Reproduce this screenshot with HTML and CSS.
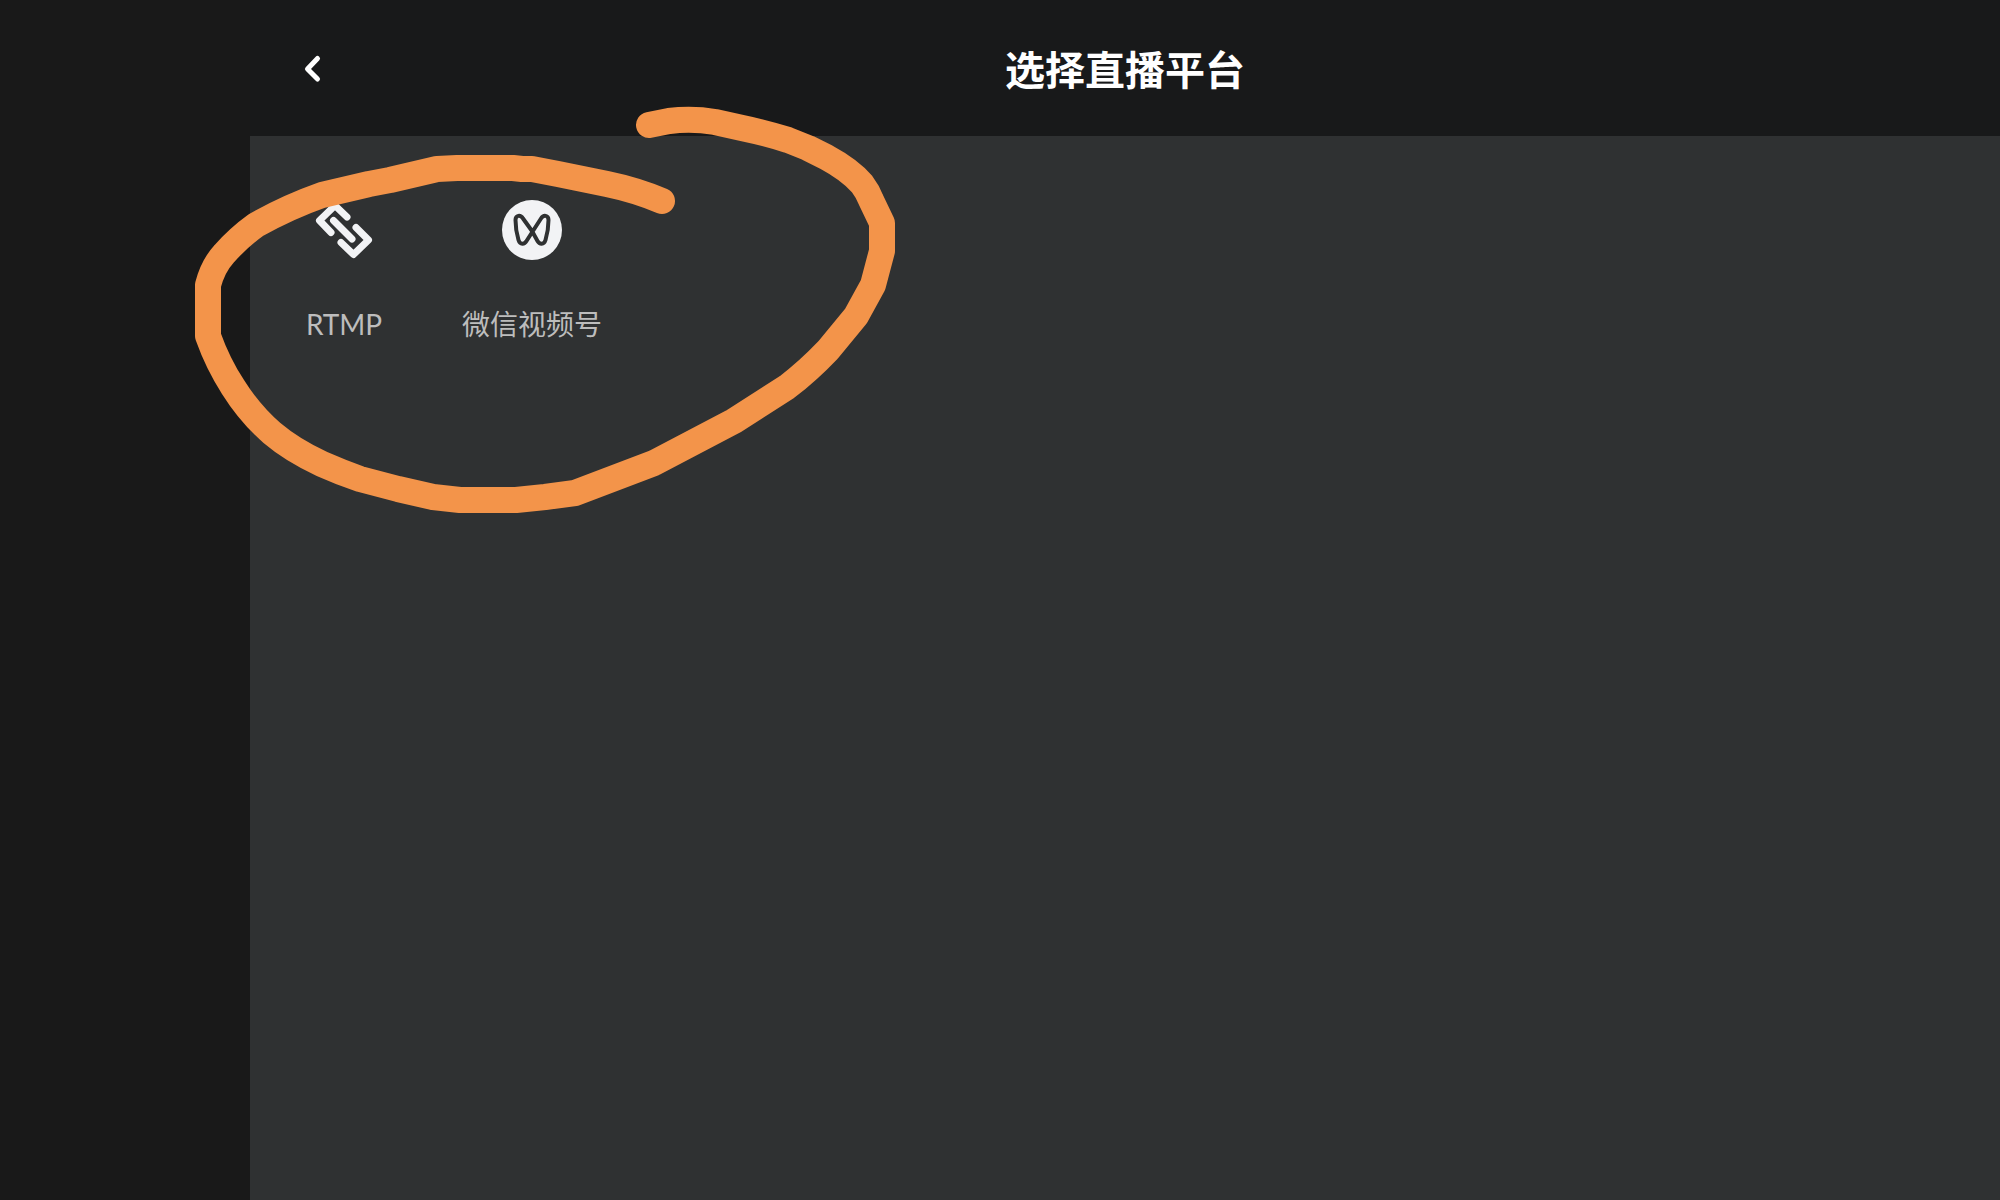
FILE: index.html
```html
<!DOCTYPE html>
<html lang="zh-CN">
<head>
    <meta charset="UTF-8">
    <title>选择直播平台</title>
    <link rel="stylesheet" href="styles.css">
</head>
<body>
    <div class="app">
        <aside class="sidebar"></aside>
        <div class="panel">
            <header class="header">
                <button class="back-btn" aria-label="返回">
                    <svg width="24" height="32" viewBox="0 0 24 32">
                        <path d="M17.500 6.500L7.500 17L17.500 27"/>
                    </svg>
                </button>
                <h1 class="title">选择直播平台</h1>
            </header>
            <main class="platforms">
                <button class="platform">
                    <svg class="platform-icon link-icon" viewBox="0 0 60 60">
                        <path d="M17 32.500L5.500 20.500L21 5.500L33 17M19.500 20.500L38 39M27 42.500L39.500 54.500L54.500 40L42 27.500"/>
                    </svg>
                    <span>RTMP</span>
                </button>
                <button class="platform">
                    <svg class="platform-icon channels-icon" viewBox="0 0 60 60">
                        <circle cx="30" cy="30" r="30"/>
                        <path d="M30 31L21 18.500C18.500 14.500 13.500 15 13.500 20C13.500 27 15 35 16.500 40C18 45 22.500 44.500 24.500 41L39 18.500C41.500 14.500 46.500 15 46.500 20C46.500 27 45 35 43.500 40C42 45 37.500 44.500 35.500 41Z"/>
                    </svg>
                    <span>微信视频号</span>
                </button>
            </main>
        </div>
    </div>

    <!-- 手绘圈注 -->
    <svg class="mark" width="900" height="520" viewBox="0 0 900 520">
        <path d="M649 125L669 121Q692 118 715 122L742 128Q766 133 788 140L808 148L826 157Q850 170 862 184Q868 192 871 200L882 223L882 251L873 285L856 316Q842 333 828 350Q808 371 787 387L734 421L654 463L575 493L545 497L516 500L460 500L433 497L398 489L360 479Q340 472 322 464Q292 450 272 433Q250 414 233 387Q218 364 208 336L208 285Q213 266 224 254Q238 238 256 225Q288 207 322 195L369 184L390 180L437 169L457 168L513 168L522 169L532 169L558 174L607 184Q636 190 662 201"/>
    </svg>
</body>
</html>
```

FILE: styles.css
```css
* {
    box-sizing: border-box;
}
body {
    margin: 0;
    background-color: #191919;
    color: white;
    font-family: Lato, 'Noto Sans CJK SC', sans-serif;
}
button {
    padding: 0;
    border: none;
    background: none;
    color: inherit;
    font-family: inherit;
    cursor: pointer;
}
svg {
    display: block;
}
.app {
    display: flex;
    min-height: 100vh;
}
.sidebar {
    width: 250px;
    flex-shrink: 0;
}
.panel {
    flex: 1;
    display: flex;
    flex-direction: column;
    background-color: #2f3132;
}
.header {
    display: grid;
    grid-template-columns: 1fr auto 1fr;
    align-items: center;
    height: 136px;
    padding: 0 50px;
    background-color: #18191a;
}
.back-btn {
    justify-self: start;
}
.back-btn path {
    fill: none;
    stroke: white;
    stroke-width: 5;
    stroke-linecap: round;
    stroke-linejoin: round;
}
.title {
    margin: 0;
    padding-top: 4px;
    font-size: 40px;
    line-height: 60px;
    font-weight: bold;
}
.platforms {
    display: flex;
    padding-top: 64px;
}
.platform {
    display: flex;
    flex-direction: column;
    align-items: center;
    gap: 44px;
    width: 188px;
    color: #bdbdbd;
    font-size: 28px;
    line-height: 40px;
}
.platform-icon {
    width: 60px;
    height: 60px;
}
.link-icon path {
    fill: none;
    stroke: #f2f3f5;
    stroke-width: 7;
    stroke-linecap: round;
    stroke-linejoin: round;
}
.channels-icon circle {
    fill: #f2f3f5;
}
.channels-icon path {
    fill: none;
    stroke: #2f3132;
    stroke-width: 4;
    stroke-linejoin: round;
}
.mark {
    position: absolute;
    top: 0;
    left: 0;
    pointer-events: none;
}
.mark path {
    fill: none;
    stroke: #f3944a;
    stroke-width: 26;
    stroke-linecap: round;
    stroke-linejoin: round;
}
```
